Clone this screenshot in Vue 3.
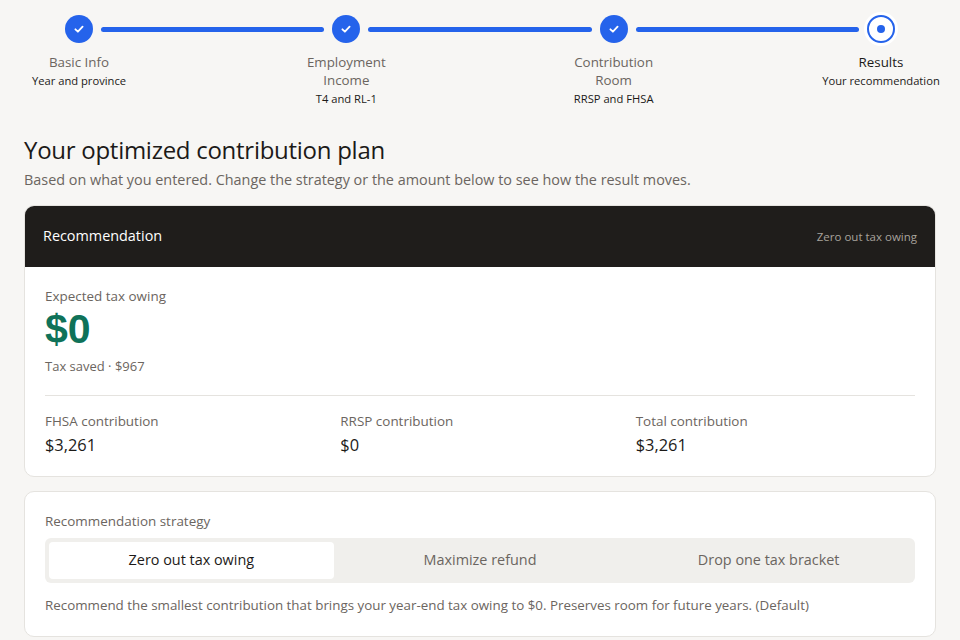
<script setup>
const steps = [
  { title: ['Basic Info'], sub: 'Year and province', done: true },
  { title: ['Employment', 'Income'], sub: 'T4 and RL-1', done: true },
  { title: ['Contribution', 'Room'], sub: 'RRSP and FHSA', done: true },
  { title: ['Results'], sub: 'Your recommendation', done: false },
]
const stats = [
  { label: 'FHSA contribution', value: '$3,261' },
  { label: 'RRSP contribution', value: '$0' },
  { label: 'Total contribution', value: '$3,261' },
]
const options = ['Zero out tax owing', 'Maximize refund', 'Drop one tax bracket']
</script>

<template>
  <div class="page">
    <div class="track">
      <template v-for="(s, i) in steps" :key="i">
        <span v-if="s.done" class="dot">
          <svg width="12" height="12" viewBox="0 0 12 12" fill="none">
            <path d="M2.4 6.3 4.9 8.7 9.6 3.6" stroke="#fff" stroke-width="1.8" stroke-linecap="round" stroke-linejoin="round" />
          </svg>
        </span>
        <span v-else class="dot current"><span class="pip"></span></span>
        <span v-if="i < steps.length - 1" class="line"></span>
      </template>
    </div>
    <div class="labels">
      <div v-for="(s, i) in steps" :key="i" class="step" :class="{ active: !s.done }">
        <div class="title"><div v-for="t in s.title" :key="t">{{ t }}</div></div>
        <div class="sub">{{ s.sub }}</div>
      </div>
    </div>

    <h1>Your optimized contribution plan</h1>
    <p class="lead">Based on what you entered. Change the strategy or the amount below to see how the result moves.</p>

    <section class="card result">
      <header class="bar">
        <span class="bar-title">Recommendation</span>
        <span class="bar-note">Zero out tax owing</span>
      </header>
      <div class="result-body">
        <div class="muted">Expected tax owing</div>
        <div class="big">$0</div>
        <div class="muted saved">Tax saved · $967</div>
        <div class="stats">
          <div v-for="s in stats" :key="s.label">
            <div class="muted">{{ s.label }}</div>
            <div class="value">{{ s.value }}</div>
          </div>
        </div>
      </div>
    </section>

    <section class="card strategy">
      <div class="muted">Recommendation strategy</div>
      <div class="segments">
        <button v-for="(o, i) in options" :key="o" class="segment" :class="{ on: i === 0 }">{{ o }}</button>
      </div>
      <p class="note">Recommend the smallest contribution that brings your year-end tax owing to $0. Preserves room for future years. (Default)</p>
    </section>
  </div>
</template>

<style scoped>
.page {
  box-sizing: border-box;
  width: 960px;
  height: 640px;
  overflow: hidden;
  padding: 15px 24px 0;
  background: #f7f6f4;
  color: #1c1a18;
  font-family: "Open Sans", "Noto Sans", sans-serif;
}
.track {
  display: flex;
  align-items: center;
  margin: 0 41px;
}
.dot {
  flex: none;
  box-sizing: border-box;
  width: 28px;
  height: 28px;
  border-radius: 50%;
  background: #2563eb;
  display: flex;
  align-items: center;
  justify-content: center;
}
.dot.current {
  background: #fff;
  border: 2px solid #2563eb;
  box-shadow: 0 0 0 3px #fff;
}
.pip {
  width: 8px;
  height: 8px;
  border-radius: 50%;
  background: #2563eb;
}
.line {
  flex: 1;
  height: 5px;
  margin: 0 8px;
  border-radius: 3px;
  background: #2563eb;
}
.labels {
  display: flex;
  justify-content: space-between;
  margin-top: 10px;
}
.step {
  width: 110px;
  text-align: center;
  white-space: nowrap;
  display: flex;
  flex-direction: column;
  align-items: center;
}
.title {
  font-size: 13.35px;
  line-height: 18px;
  color: #6b6560;
}
.step.active .title {
  color: #1c1a18;
}
.sub {
  margin-top: 2px;
  font-size: 11.2px;
  line-height: 16px;
  color: #1c1a18;
}
h1 {
  margin: 26px 0 0;
  font-size: 24px;
  line-height: 34px;
  font-weight: 400;
  letter-spacing: -0.27px;
}
.lead {
  margin: 3px 0 0;
  font-size: 14.4px;
  line-height: 20px;
  color: #6b6560;
}
.card {
  background: #fff;
  border: 1px solid #e5e3df;
  border-radius: 10px;
}
.result {
  margin-top: 15px;
  overflow: hidden;
}
.bar {
  display: flex;
  justify-content: space-between;
  align-items: center;
  height: 61px;
  padding: 0 18px;
  background: #1f1d1b;
}
.bar-title {
  margin-bottom: 2px;
  color: #fff;
  font-size: 14.4px;
}
.bar-note {
  color: #a8a39d;
  font-size: 11.5px;
}
.result-body {
  padding: 20px 20px 20px;
}
.muted {
  font-size: 13.45px;
  line-height: 18px;
  color: #6b6560;
}
.big {
  font-family: "Liberation Sans", sans-serif;
  font-size: 41px;
  line-height: 48px;
  font-weight: 700;
  color: #0f7259;
}
.saved {
  margin-top: 4px;
  font-size: 13px;
}
.stats {
  display: grid;
  grid-template-columns: repeat(3, 1fr);
  gap: 16px;
  margin-top: 20px;
  padding-top: 16px;
  border-top: 1px solid #e5e3df;
}
.value {
  margin-top: 4px;
  font-size: 16.4px;
  line-height: 22px;
  color: #1c1a18;
}
.strategy {
  margin-top: 14px;
  padding: 20px 20px 22px;
}
.segments {
  display: grid;
  grid-template-columns: repeat(3, 1fr);
  gap: 4px;
  margin-top: 8px;
  padding: 4px;
  border-radius: 6px;
  background: #f0efec;
}
.segment {
  height: 37px;
  padding: 0 0 2px;
  border: 0;
  border-radius: 4px;
  background: transparent;
  color: #6b6560;
  font: inherit;
  font-size: 14.4px;
}
.segment.on {
  background: #fff;
  color: #1c1a18;
}
.note {
  margin: 13px 0 0;
  font-size: 13.37px;
  line-height: 18px;
  color: #6b6560;
}
</style>
